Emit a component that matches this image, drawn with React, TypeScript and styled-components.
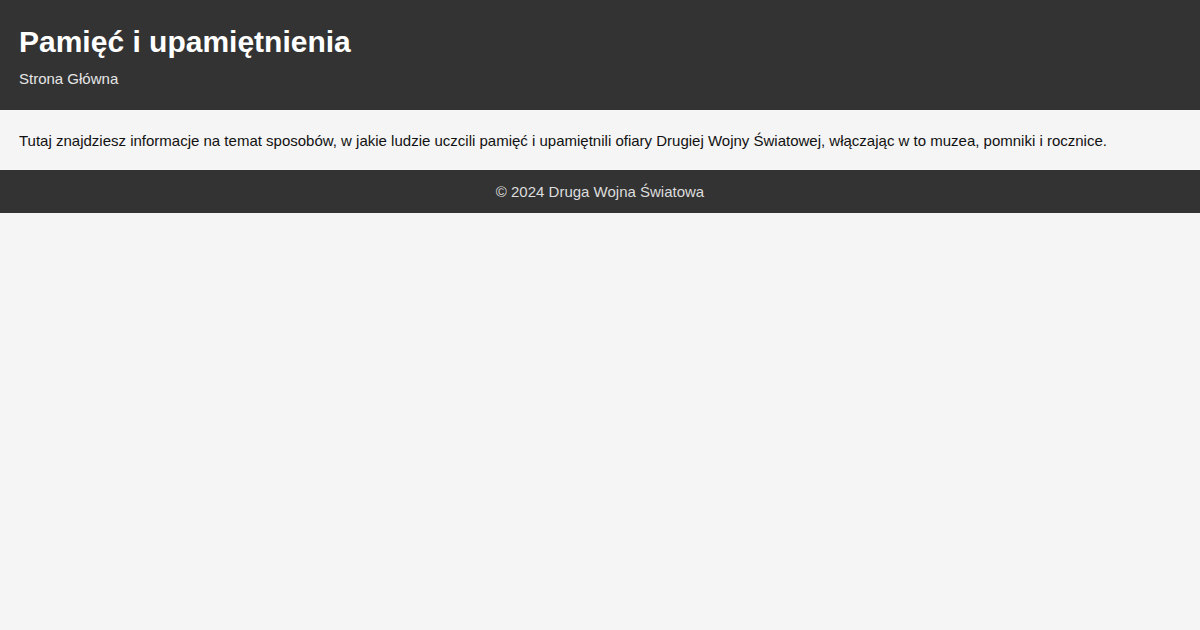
import React from "react";
import styled, { createGlobalStyle } from "styled-components";

const Global = createGlobalStyle`
  html, body { margin: 0; padding: 0; background: #f5f5f5; }
  body { font-family: "Liberation Sans", Arial, sans-serif; color: #111; }
`;

const Header = styled.header`
  background: #333;
  color: #fff;
  padding: 22px 19px 0;
  height: 110px;
  box-sizing: border-box;
`;

const Title = styled.h1`
  margin: 0 0 8px;
  font-size: 30px;
  line-height: 40px;
  font-weight: bold;
`;

const Nav = styled.nav`
  font-size: 15px;
  line-height: 17px;
  color: #e6e6e6;
`;

const Main = styled.main`
  padding: 22px 19px 20px;
  height: 60px;
  box-sizing: border-box;
  font-size: 15px;
  line-height: 18px;
`;

const Footer = styled.footer`
  background: #333;
  color: #ddd;
  text-align: center;
  height: 43px;
  box-sizing: border-box;
  padding: 13px 0 0;
  font-size: 15px;
  line-height: 18px;
`;

export default function App() {
  return (
    <>
      <Global />
      <Header>
        <Title>Pamięć i upamiętnienia</Title>
        <Nav>Strona Główna</Nav>
      </Header>
      <Main>
        Tutaj znajdziesz informacje na temat sposobów, w jakie ludzie uczcili pamięć i upamiętnili ofiary Drugiej Wojny Światowej, włączając w to muzea, pomniki i rocznice.
      </Main>
      <Footer>© 2024 Druga Wojna Światowa</Footer>
    </>
  );
}
